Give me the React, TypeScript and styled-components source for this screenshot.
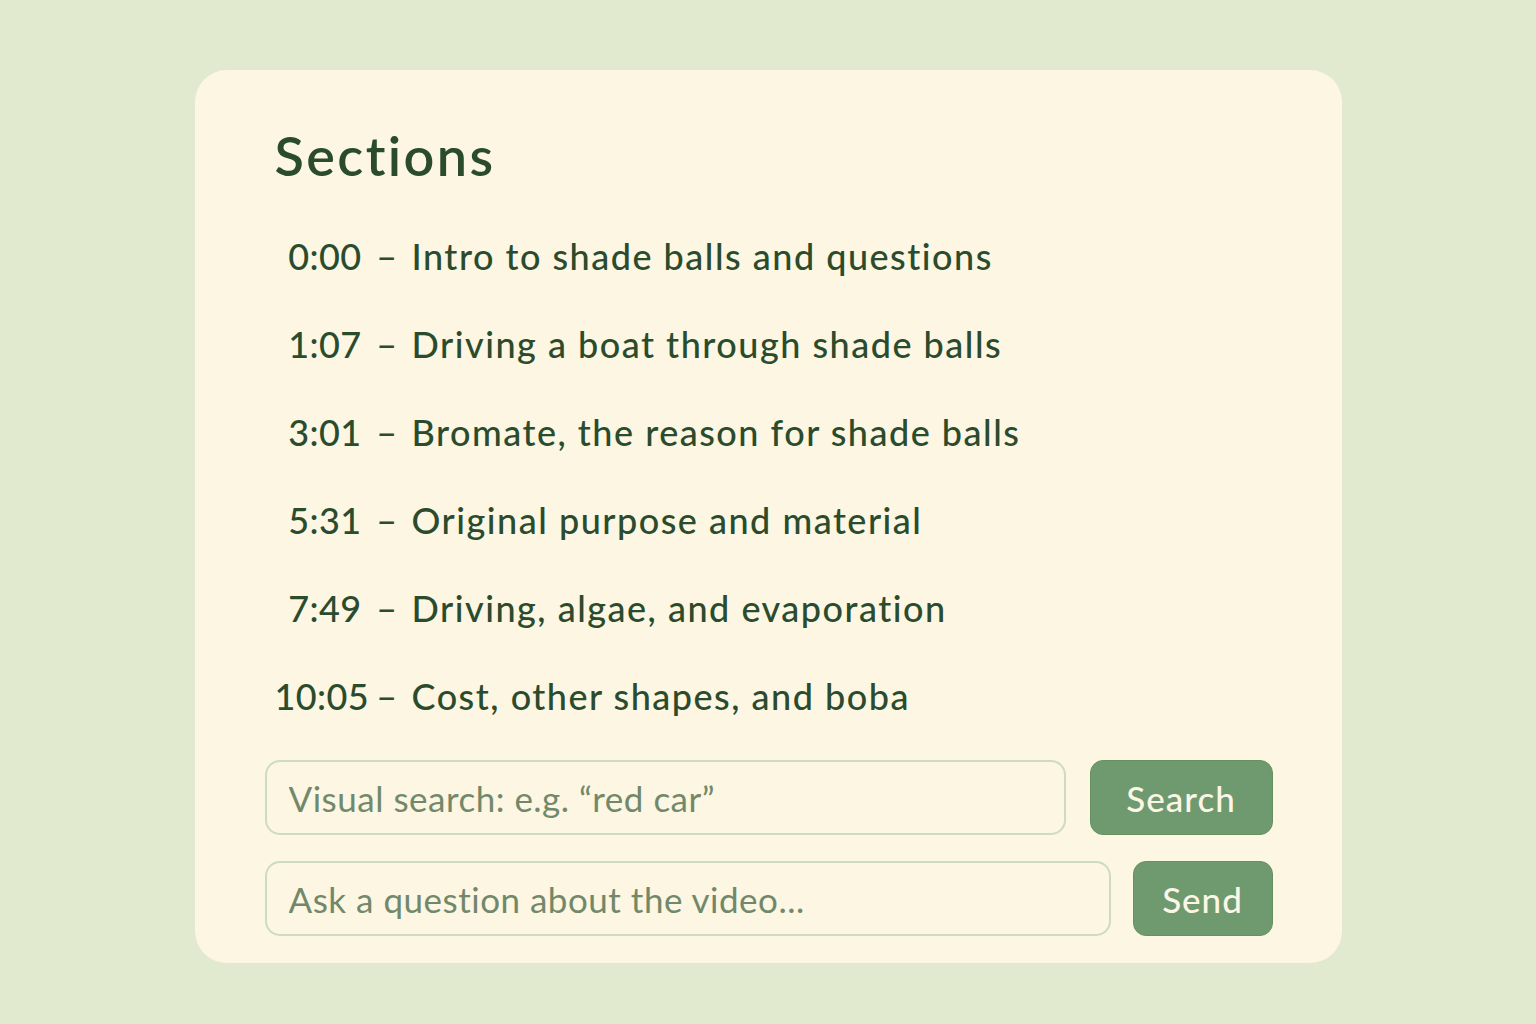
import React from "react";
import styled, { createGlobalStyle } from "styled-components";

const Global = createGlobalStyle`
  html, body { margin: 0; padding: 0; background: #e1eacf; }
  body { font-family: Lato, "Open Sans", sans-serif; font-variant-ligatures: none; }
  * { box-sizing: border-box; }
`;

const Page = styled.div`
  width: 1536px;
  height: 1024px;
  background: #e1eacf;
  padding-top: 70px;
`;

const Card = styled.div`
  width: 1147px;
  height: 893px;
  margin: 0 auto;
  background: #fcf6e3;
  border-radius: 32px;
  padding: 54px 69px 27px 70px;
  display: flex;
  flex-direction: column;
`;

const Title = styled.h1`
  margin: 0 0 24px 10px;
  font-size: 54px;
  line-height: 64px;
  font-weight: 600;
  letter-spacing: 2.4px;
  font-variant-ligatures: none;
  color: #2b4b2d;
`;

const List = styled.div`
  display: flex;
  flex-direction: column;
  margin-left: 10px;
  margin-bottom: 20px;
`;

const Row = styled.div`
  display: flex;
  align-items: center;
  height: 88px;
  font-size: 36px;
  font-weight: 500;
  letter-spacing: 1.5px;
  font-variant-ligatures: none;
  color: #2b4b2d;
`;

const Time = styled.span`
  flex: none;
  width: 87px;
  min-width: 0;
  white-space: nowrap;
  text-align: right;
  letter-spacing: 0.4px;
`;

const Dash = styled.span`
  flex: none;
  width: 50px;
  padding-left: 2px;
  text-align: center;
`;

const Label = styled.span``;

const FormRow = styled.div<{ $gap: number }>`
  display: flex;
  gap: ${(p) => p.$gap}px;
  height: 75px;
  & + & { margin-top: 26px; }
`;

const Input = styled.input`
  flex: 1;
  height: 100%;
  border: 2px solid #cddcbd;
  border-radius: 15px;
  background: #fcf6e3;
  padding: 0 22px;
  font-family: Lato, "Open Sans", sans-serif;
  font-size: 35px;
  font-weight: 400;
  letter-spacing: 0.5px;
  color: #2b4b2d;
  outline: none;
  &::placeholder { color: #71896a; }
`;

const Button = styled.button<{ $w: number }>`
  width: ${(p) => p.$w}px;
  height: 100%;
  border: 1px solid #65905f;
  border-radius: 13px;
  background: #6f9a6f;
  color: #fbf6e6;
  font-family: Lato, "Open Sans", sans-serif;
  font-size: 35px;
  font-weight: 500;
  letter-spacing: 1px;
  cursor: pointer;
`;

const sections = [
  ["0:00", "Intro to shade balls and questions"],
  ["1:07", "Driving a boat through shade balls"],
  ["3:01", "Bromate, the reason for shade balls"],
  ["5:31", "Original purpose and material"],
  ["7:49", "Driving, algae, and evaporation"],
  ["10:05", "Cost, other shapes, and boba"],
];

export default function App() {
  return (
    <Page>
      <Global />
      <Card>
        <Title>Sections</Title>
        <List>
          {sections.map(([t, l]) => (
            <Row key={t}>
              <Time>{t}</Time>
              <Dash>–</Dash>
              <Label>{l}</Label>
            </Row>
          ))}
        </List>
        <FormRow $gap={24}>
          <Input placeholder="Visual search: e.g. “red car”" />
          <Button $w={183}>Search</Button>
        </FormRow>
        <FormRow $gap={22}>
          <Input placeholder="Ask a question about the video..." />
          <Button $w={140}>Send</Button>
        </FormRow>
      </Card>
    </Page>
  );
}
